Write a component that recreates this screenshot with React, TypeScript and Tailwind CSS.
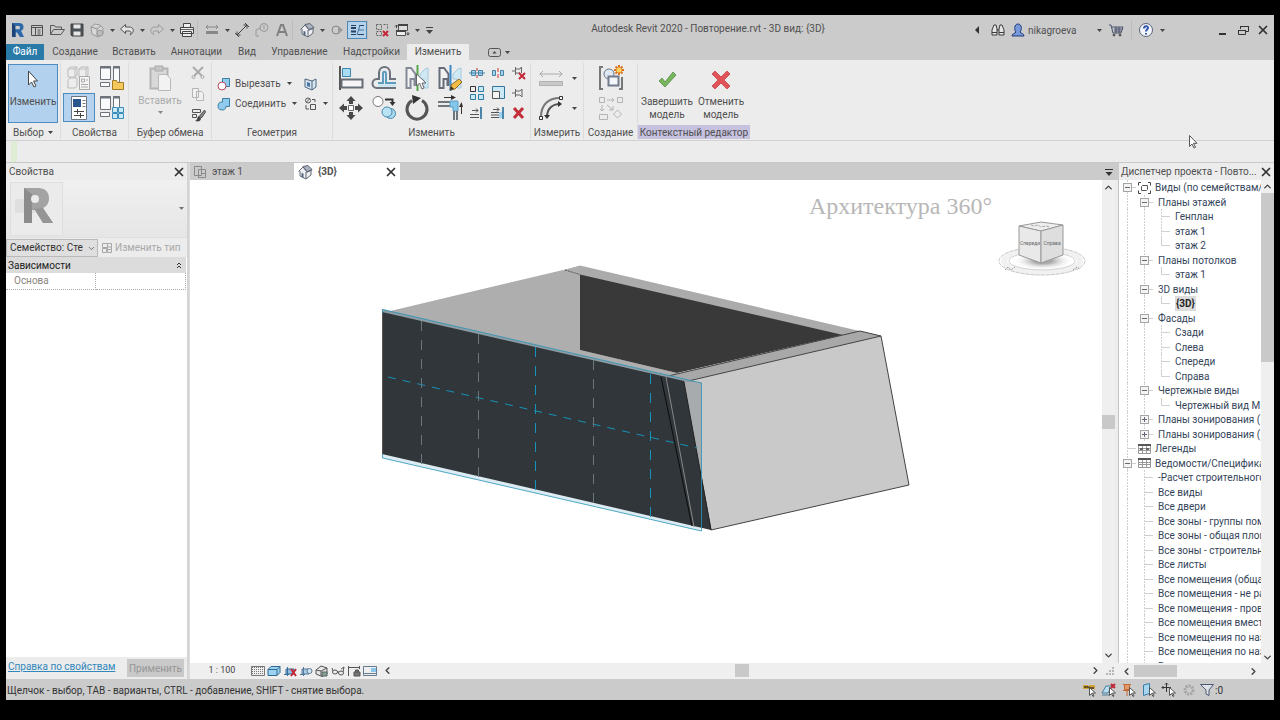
import React, { useState } from "react";
import clsx from "clsx";
import { ChevronDown, ChevronLeft, ChevronRight, ChevronUp, X } from "lucide-react";

type IconProps = {
  w?: number;
  h?: number;
  children: React.ReactNode;
};

const Icon = ({ w = 16, h = 16, children }: IconProps) => (
  <svg
    width={w}
    height={h}
    viewBox={`0 0 ${w} ${h}`}
    fill="none"
    stroke="#555"
    aria-hidden="true"
    className="shrink-0"
  >
    {children}
  </svg>
);

const Caret = ({ className }: { className?: string }) => (
  <svg
    width="5"
    height="3"
    viewBox="0 0 5 3"
    fill="#444"
    aria-hidden="true"
    className={clsx("shrink-0", className)}
  >
    <path d="M0 0h5L2.500 3z" />
  </svg>
);

const HouseIcon = () => (
  <Icon>
    <path d="M2 7l4-4 5-1 3 4v5l-5 4-6-3V7" fill="#eef0f3" stroke="#606875" />
    <path d="M1.500 7.500L6 3l4 5M9.500 8.500L15 6M9 8v7" stroke="#606875" />
    <path d="M6 2.500l5-1 4 4-5 2z" fill="#aab2c0" stroke="#606875" />
    <path d="M4.500 9v4l2 .8V9.600z" fill="#56657f" stroke="none" />
  </Icon>
);

/* ---------- Quick access toolbar ---------- */

const quickAccess: { label: string; icon?: React.ReactNode; active?: boolean }[] = [
  {
    label: "Revit",
    icon: (
      <Icon>
        <path
          d="M3 1h7c3 0 4.500 1.500 4.500 4s-1 3-2.500 3.800L15 15h-4L8 10.500H6.500V15H3z"
          fill="#2d68a8"
          stroke="none"
        />
        <path d="M3 1l3.500 3v11H3z" fill="#1d4477" stroke="none" />
        <path d="M6.500 4H9.500c2 0 2 3.300 0 3.300H6.500z" fill="#cbcbcb" stroke="none" />
      </Icon>
    ),
  },
  {
    label: "Главная",
    icon: (
      <Icon>
        <path d="M2.500 3.500h11v10h-11zM2.500 5.500h11M6.500 5.500v8M8.500 8h3M8.500 10h3M8.500 12h3" stroke="#505050" />
      </Icon>
    ),
  },
  {
    label: "Открыть",
    icon: (
      <Icon>
        <path d="M1.500 12.500v-9h4l1 1.500h6v2.500M1.500 12.500l3-5h11l-3.500 5z" stroke="#585858" />
      </Icon>
    ),
  },
  {
    label: "Сохранить",
    icon: (
      <Icon>
        <path d="M2 2h12v12H3l-1-1z" fill="#4b5057" stroke="#454545" />
        <path d="M4.500 2.500h7v4h-7zM4.500 9.500h7v4h-7z" fill="#e6e6e6" stroke="none" />
      </Icon>
    ),
  },
  {
    label: "Синхронизировать",
    icon: (
      <Icon>
        <path d="M2 5l4-3 5 1 3 3v6l-5 3-6-3zM2 5l6 2 4-3M8 7v7" stroke="#999" fill="#d8d8d8" />
        <circle cx="11" cy="11" r="3" fill="#bbb" stroke="#999" />
      </Icon>
    ),
  },
  { label: "caret" },
  {
    label: "Отменить",
    icon: (
      <Icon>
        <path d="M6.500 2.500L1.500 7l5 4.500V9H10c2 0 3 1.500 1 4 5-3 4-8-1-8H6.500z" fill="#e4e4e4" />
      </Icon>
    ),
  },
  { label: "caret" },
  {
    label: "Повторить",
    icon: (
      <Icon>
        <path d="M9.500 2.500l5 4.500-5 4.500V9H6c-2 0-3 1.500-1 4-5-3-4-8 1-8h3.500z" stroke="#9c9c9c" />
      </Icon>
    ),
  },
  { label: "caret" },
  {
    label: "Печать",
    icon: (
      <Icon>
        <path d="M4.500 5V1.500h7V5M1.500 5.500h13v6h-13zM3.500 9.500h9v5h-9z" fill="#eee" stroke="#444" />
        <path d="M2 7.500h12" stroke="#666" />
      </Icon>
    ),
  },
  { label: "sep" },
  {
    label: "Измерить",
    icon: (
      <Icon>
        <path d="M2 5h12M4 3L2 5l2 2M12 3l2 2-2 2" stroke="#888" />
        <path d="M2 9h12v3H2z" fill="#888" stroke="none" />
      </Icon>
    ),
  },
  { label: "caret" },
  {
    label: "Размер",
    icon: (
      <Icon>
        <path d="M3 13L13 3M3 13V9.500M3 13h3.500M13 3v3.500M13 3H9.500M1 11l4 4M11 1l4 4" stroke="#444" />
      </Icon>
    ),
  },
  {
    label: "Марка",
    icon: (
      <Icon>
        <path d="M2 14V8l5-2M2 14h3" stroke="#999" />
        <circle cx="10" cy="5.500" r="4" stroke="#999" />
        <path d="M9 4.500l1-1v4" stroke="#999" />
      </Icon>
    ),
  },
  {
    label: "Текст",
    icon: (
      <Icon>
        <path d="M3 14L7 3h2l4 11M5 10h6" stroke="#808080" strokeWidth="2" />
      </Icon>
    ),
  },
  { label: "sep" },
  { label: "3D вид", icon: <HouseIcon /> },
  { label: "caret" },
  {
    label: "Разрез",
    icon: (
      <Icon>
        <circle cx="7" cy="8" r="4" stroke="#858585" />
        <path d="M9 4l5 4-5 4z" fill="#999" stroke="none" />
      </Icon>
    ),
  },
  {
    label: "Тонкие линии",
    active: true,
    icon: (
      <Icon>
        <path d="M2 3.500h5M10 3.500h5M2 12.500h5M9 12.500h6" stroke="#26415f" />
        <path d="M2 6h5M2 9.500h5" stroke="#26415f" strokeWidth="2" />
        <path d="M11 3L8 13M9 8h6" stroke="#44749f" />
      </Icon>
    ),
  },
  { label: "sep" },
  {
    label: "Закрыть скрытые окна",
    icon: (
      <Icon>
        <path d="M2.500 2.500h5v5h-5zM9.500 2.500h4v5M2.500 9.500h5v4h-5z" stroke="#666" strokeDasharray="2 1" />
        <path d="M9 9l5 5M14 9l-5 5" stroke="#c32736" strokeWidth="2" />
      </Icon>
    ),
  },
  {
    label: "Переключение окон",
    icon: (
      <Icon>
        <path d="M4.500 2.500h9v6h-9z" fill="#ddd" stroke="#505050" />
        <path d="M2.500 8.500h9v5h-9z" fill="#eee" stroke="#505050" />
        <path d="M4 3h10M2 9h10" stroke="#444" strokeWidth="2" />
        <path d="M2.500 6V3M1 4.500L2.500 3 4 4.500M14 10v3M12.500 11.500l1.500 1.500 1.500-1.500" stroke="#444" />
      </Icon>
    ),
  },
  { label: "caret" },
];

const QuickAccess = () => (
  <div className="flex items-center">
    {quickAccess.map(({ label, icon, active }, i) => {
      if (label === "caret")
        return (
          <span key={i} className="flex w-[10px] justify-center">
            <Caret />
          </span>
        );
      if (label === "sep")
        return <span key={i} className="h-5 w-[5px] border-l border-[#bdbdbd]" />;
      return (
        <button
          key={i}
          aria-label={label}
          className={clsx(
            "flex h-[18px] w-5 items-center justify-center",
            active && "border border-[#4f87b5] bg-[#b5d2ec]"
          )}
        >
          {icon}
        </button>
      );
    })}
    <Icon w={14} h={10}>
      <path d="M4 2.500h7" stroke="#444" />
      <path d="M4 5h7L7.500 9z" fill="#444" stroke="none" />
    </Icon>
  </div>
);

const TitleBar = () => (
  <header className="grid h-[29px] grid-cols-[auto_1fr_auto] items-center bg-[#cbcbcb] pl-px pt-px text-[10px] text-[#505050]">
    <QuickAccess />
    <h1 className="pb-1 pl-[6px] text-center">Autodesk Revit 2020 - Повторение.rvt - 3D вид: {"{3D}"}</h1>
    <div className="flex items-center justify-end pr-1">
      <Icon w={6} h={8}>
        <path d="M5 0v8L1 4z" fill="#333" stroke="none" />
      </Icon>
      <button aria-label="Поиск" className="ml-2 flex w-5 justify-center">
        <Icon>
          <path d="M2 8l2-5h2l1 4v6H2zM14 8l-2-5h-2L9 7v6h5zM7 8h2M2 10.500h5M9 10.500h5" fill="#e6e6e6" stroke="#3c3c3c" />
        </Icon>
      </button>
      <button aria-label="Учетная запись" className="flex w-5 justify-center">
        <Icon>
          <path d="M2 14c0-3 3-2 4-4-2-2-2-8 2-8s4 6 2 8c1 2 4 1 4 4z" fill="#7898dc" stroke="#233d78" />
        </Icon>
      </button>
      <span className="w-[69px]">nikagroeva</span>
      <Caret />
      <button aria-label="Магазин" className="ml-1 mr-[5px] flex w-5 justify-center">
        <Icon>
          <path d="M1 3h2l2 8h8l2-6H4M6 7h8M6 9h7M8 5v6M11 5v6" stroke="#44506a" />
          <circle cx="6" cy="13" r="1" fill="#444" />
          <circle cx="12" cy="13" r="1" fill="#444" />
        </Icon>
      </button>
      <span className="h-5 border-l border-[#bdbdbd]" />
      <button aria-label="Справка" className="ml-1 mr-1 flex w-5 justify-center">
        <Icon>
          <circle cx="8" cy="8" r="6.500" fill="#f3f5fa" stroke="#596579" />
          <path d="M6 6.500c0-3 4-3 4-.7C10 7.500 8 7.500 8 9.500M8 11v1.500" stroke="#3057ad" strokeWidth="2" />
        </Icon>
      </button>
      <Caret />
      <div className="ml-[49px] flex">
        <button aria-label="Свернуть" className="w-[21px]">
          <Icon>
            <path d="M5 12h7" stroke="#333" strokeWidth="2" />
          </Icon>
        </button>
        <button aria-label="Восстановить" className="w-[21px]">
          <Icon>
            <path d="M5.500 7V4.500h8v5H11M3.500 8.500h7v4h-7zM5 4.500h9M3 8.500h8" stroke="#333" />
          </Icon>
        </button>
        <button aria-label="Закрыть">
          <X size={14} strokeWidth={3} color="#333" />
        </button>
      </div>
    </div>
  </header>
);

/* ---------- Ribbon ---------- */

const ribbonTabs = [
  { name: "Создание", width: "w-[62px]" },
  { name: "Вставить", width: "w-[56px]" },
  { name: "Аннотации", width: "w-[69px]" },
  { name: "Вид", width: "w-[32px]" },
  { name: "Управление", width: "w-[73px]" },
  { name: "Надстройки", width: "w-[71px]" },
  { name: "Изменить", width: "w-[62px]" },
];

const RibbonTabs = () => {
  const [tab, setTab] = useState("Изменить");

  return (
    <nav className="flex h-4 bg-[#cbcbcb] text-[10px] text-[#505050]">
      <button className="w-[38px] bg-[#2a7aa8] leading-4 text-white">Файл</button>
      {ribbonTabs.map(({ name, width }) => (
        <button
          key={name}
          onClick={() => setTab(name)}
          className={clsx(
            "whitespace-nowrap leading-4",
            width,
            tab === name && "bg-[#ececec]"
          )}
        >
          {name}
        </button>
      ))}
      <button aria-label="Свернуть ленту" className="ml-[19px] flex items-center gap-1">
        <Icon w={13} h={9}>
          <rect x=".5" y=".5" width="12" height="8" rx="2" />
          <path d="M4.500 5.500h4l-2-2.500z" fill="#444" stroke="none" />
        </Icon>
        <Caret />
      </button>
    </nav>
  );
};

type PanelProps = {
  title: string;
  width: string;
  menu?: boolean;
  context?: boolean;
  children: React.ReactNode;
};

const Panel = ({ title, width, menu, context, children }: PanelProps) => (
  <section
    className={clsx(
      "flex shrink-0 flex-col justify-between",
      width,
      !context && "border-r border-[#dcdcdc]"
    )}
  >
    <div className="flex h-[60px] items-center justify-center">{children}</div>
    <h2
      className={clsx(
        "flex h-[14px] items-center justify-center whitespace-nowrap",
        context && "bg-[#c5c1df]"
      )}
    >
      {title}
      {menu && <Caret className="ml-1" />}
    </h2>
  </section>
);

const Tool = ({ label, className, children }: { label: string; className?: string; children: React.ReactNode }) => (
  <button aria-label={label} className={clsx("flex items-center justify-center", className)}>
    {children}
  </button>
);

const bigTools = [
  {
    label: "Выровнять",
    icon: (
      <Icon w={26} h={26}>
        <path d="M2 1v24" stroke="#555" strokeWidth="2" />
        <path d="M4.500 3.500h8v8h-8z" fill="#a9dbf3" stroke="#3a87b0" />
        <path d="M3.500 14.500h21v8h-21z" fill="#f5f5f5" stroke="#676d76" strokeWidth="2" />
      </Icon>
    ),
  },
  {
    label: "Смещение",
    icon: (
      <Icon w={26} h={26}>
        <path d="M25 14h-6V8c0-8-11-8-11 0v6H6c-6 0-6 9 0 9h19" stroke="#6c727b" strokeWidth="2" />
        <path d="M25 18H15V9c0-3-3-3-3 0v9H7" stroke="#5b9cbf" strokeWidth="2" />
        <path d="M7 20.500h18" stroke="#c5e4f2" strokeWidth="2" />
      </Icon>
    ),
  },
  {
    label: "Зеркало - Выбрать ось",
    icon: (
      <Icon w={26} h={26}>
        <path d="M2.500 3v20h4v-9h4v6h1V9L7 3z" fill="#f2f2f2" stroke="#838996" strokeWidth="2" />
        <path d="M24 3v20h-4v-9h-4V9l5-5z" fill="#cfe8f4" stroke="#a3cadc" />
        <path d="M13.500 0v26" stroke="#58a64b" strokeWidth="2" />
        <path d="M12.500 9v12l3-3 2.500 6 2-1-2-5h4z" fill="#fff" stroke="#666" />
      </Icon>
    ),
  },
  {
    label: "Зеркало - Нарисовать ось",
    icon: (
      <Icon w={26} h={26}>
        <path d="M2.500 3v20h4v-9h4v6h1V9L7 3z" fill="#f2f2f2" stroke="#676d78" strokeWidth="2" />
        <path d="M24 3v20h-4v-9h-4V9l5-5z" fill="#cfe8f4" stroke="#a3cadc" />
        <path d="M13.500 0v26" stroke="#3a8ccc" strokeWidth="2" />
        <path d="M13 25l1-5 8-6 3 3-7 7z" fill="#f2bd45" stroke="#8d6828" />
        <path d="M13 25l1-4 3 3z" fill="#333" stroke="none" />
      </Icon>
    ),
  },
  {
    label: "Переместить",
    icon: (
      <Icon w={26} h={26}>
        <path d="M10.500 10.500h5v5h-5z" fill="#fff" stroke="#666" />
        <path
          d="M13 1l4.500 5H15v3h-4V6H8.500zM13 25l4.500-5H15v-3h-4v3H8.500zM1 13l5-4.500V11h3v4H6v2.500zM25 13l-5-4.500V11h-3v4h3v2.500z"
          fill="#484848"
          stroke="none"
        />
      </Icon>
    ),
  },
  {
    label: "Копировать",
    icon: (
      <Icon w={26} h={26}>
        <circle cx="7" cy="6.500" r="5" fill="#fff" stroke="#777" />
        <path d="M14 4.500h7.500v4" stroke="#333" strokeWidth="2" />
        <path d="M18.500 7h6l-3 4z" fill="#333" stroke="none" />
        <circle cx="19.500" cy="18.500" r="5" fill="#a9dbf3" stroke="#4589ac" />
        <circle cx="16" cy="17" r="5" fill="#b9e2f5" stroke="#4589ac" />
      </Icon>
    ),
  },
  {
    label: "Повернуть",
    icon: (
      <Icon w={26} h={26}>
        <path d="M18 5.500A10 10 0 1 1 8 5.500" stroke="#555" strokeWidth="3" />
        <path d="M8 0l9 3-8 6z" fill="#333" stroke="none" />
      </Icon>
    ),
  },
  {
    label: "Обрезать в угол",
    icon: (
      <Icon w={26} h={26}>
        <path d="M1 7h12M1 11h12" stroke="#70767e" strokeWidth="2" />
        <path d="M13 6h8v10h-5v-4h-3z" fill="#83c7ea" stroke="#5aa0c4" />
        <path d="M17 16v9M20 16v9" stroke="#70767e" strokeWidth="2" />
        <path d="M7 2.500h8M24.500 19v-7" stroke="#333" />
        <path d="M14 0l5 2.500L14 5zM22 12l2.500-5 1.500 5z" fill="#333" stroke="none" />
      </Icon>
    ),
  },
];

const smallTools = [
  {
    label: "Разделить элемент",
    icon: (
      <Icon>
        <path d="M2.500 5.500h4v5h-4zM9.500 5.500h4v5h-4z" fill="#9fd2ee" stroke="#4a81a3" />
        <path d="M0 8h16" stroke="#4a81a3" />
        <path d="M8 3v3M8 10v3" stroke="#b33" />
      </Icon>
    ),
  },
  {
    label: "Разделить с зазором",
    icon: (
      <Icon>
        <path d="M2.500 5.500h3v5h-3zM10.500 5.500h3v5h-3z" fill="#9fd2ee" stroke="#4a81a3" />
        <path d="M8 3v4M8 9v4" stroke="#c33" />
      </Icon>
    ),
  },
  {
    label: "Открепить",
    icon: (
      <Icon>
        <path d="M1 6h3M4.500 2v8M4.500 4H9M4.500 8H9M10.500 2v6M9 4l1.500-2" stroke="#666" />
        <path d="M8 8l6 6M14 8l-6 6" stroke="#c32736" strokeWidth="2" />
      </Icon>
    ),
  },
  {
    label: "Массив",
    icon: (
      <Icon>
        <path d="M1.500 1.500h5v5h-5z" fill="#eee" stroke="#333" />
        <path d="M9.500 1.500h5v5h-5zM1.500 9.500h5v5h-5zM9.500 9.500h5v5h-5z" fill="#c9e8f6" stroke="#2d7aa3" />
      </Icon>
    ),
  },
  {
    label: "Масштаб",
    icon: (
      <Icon>
        <path d="M2.500 1.500h12v12h-12z" fill="#cbe8f6" stroke="#347697" />
        <path d="M2.500 6.500h7v7h-7z" fill="#f4f4f4" stroke="#555" />
      </Icon>
    ),
  },
  {
    label: "Закрепить",
    icon: (
      <Icon>
        <path d="M1 8h3M4.500 4v8M4.500 6H9l2-2v8l-2-2H4.500" stroke="#666" />
      </Icon>
    ),
  },
  {
    label: "Обрезать элемент",
    icon: (
      <Icon>
        <path d="M1 9.500h9M1 12.500h9M3 5.500h6M7 3.500l2 2-2 2" stroke="#555" />
        <path d="M12 2v12" stroke="#4a87ab" strokeWidth="2" />
      </Icon>
    ),
  },
  {
    label: "Обрезать несколько",
    icon: (
      <Icon>
        <path d="M1 7.500h9M1 10h9M1 12.500h9M3 4.500h6M7 2.500l2 2-2 2" stroke="#555" />
        <path d="M9 7h4v6H9z" fill="#9fd2ee" stroke="none" />
        <path d="M13 2v12" stroke="#4a87ab" strokeWidth="2" />
      </Icon>
    ),
  },
  {
    label: "Удалить",
    icon: (
      <Icon>
        <path d="M3 3l9 10M12 3L3 13" stroke="#c22f3b" strokeWidth="3" />
      </Icon>
    ),
  },
];

const PropsFrames = () => (
  <>
    <path d="M2.500 1.500h10v13h-10zM15.500 1.500h6v18h-6zM2.500 17.500h9v4h-9z" fill="#fafafa" stroke="#6d727b" />
    <path d="M2 2.500h11M15 2.500h7" stroke="#6d727b" strokeWidth="2" />
  </>
);

const Ribbon = () => (
  <div className="flex h-[80px] overflow-hidden bg-[#ececec] pb-px pt-[3px] text-[10px] text-[#505050]">
    <Panel title="Выбор" width="w-[55px]" menu>
      <button className="flex h-[59px] w-[50px] flex-col items-center justify-between border border-[#4d8cc0] bg-[#b2d1ee] pb-[14px] pt-[5px]">
        <Icon w={12} h={18}>
          <path d="M1.500 1v14l3-3 2.500 5 2-1-2.500-5h4z" fill="#fff" stroke="#444" />
        </Icon>
        <span className="leading-3">Изменить</span>
      </button>
    </Panel>
    <Panel title="Свойства" width="w-[68px]">
      <div className="grid grid-cols-2 grid-rows-2">
        <Tool label="Категория" className="h-[30px] w-8">
          <Icon w={26} h={26}>
            <path
              d="M2 4l2-2h7v8l-2 2H2zM13 4l2-2h7v8l-2 2h-7zM2 15l2-2h7v8l-2 2H2zM2 4h7v8M9 4l2-2M13 4h7v8M20 4l2-2"
              fill="#eee"
              stroke="#bbb"
            />
            <path d="M13.500 11.500h10v13h-10z" fill="#f4f4f4" stroke="#aaa" />
            <path d="M15.500 14h3v3h-3zM20 15h2M15 19.500h7M15 22h7" stroke="#aaa" />
          </Icon>
        </Tool>
        <Tool label="Типоразмеры" className="h-[30px] w-8">
          <Icon w={26} h={26}>
            <PropsFrames />
            <path d="M14.500 15.500h4l1 2h6v7h-11z" fill="#f5c85c" stroke="#a47b24" />
          </Icon>
        </Tool>
        <Tool label="Свойства" className="h-[29px] w-8 border border-[#4d8cc0] bg-[#b5d3ee]">
          <Icon w={20} h={26}>
            <path d="M2.500 1.500h15v23h-15z" fill="#fff" stroke="#6c7480" />
            <path d="M4 4h8v8H4z" fill="#29558c" stroke="none" />
            <path d="M13.500 5.500h3M13.500 8.500h3M13.500 11.500h3" stroke="#777" />
            <path d="M5 16.500h10M5 20.500h10M8.500 14v5M11.500 18v5" stroke="#444" />
          </Icon>
        </Tool>
        <Tool label="Типы семейств" className="h-[30px] w-8">
          <Icon w={26} h={26}>
            <PropsFrames />
            <path
              d="M14.500 12.500h5v5h-5zM20.500 12.500h5v5h-5zM14.500 18.500h5v5h-5zM20.500 18.500h5v5h-5z"
              fill="#c9e9f8"
              stroke="#3c8db7"
            />
          </Icon>
        </Tool>
      </div>
    </Panel>
    <Panel title="Буфер обмена" width="w-[83px]">
      <div className="flex h-full w-full justify-between pl-[10px] pr-[5px] pt-[2px]">
        <button disabled className="flex w-[42px] flex-col items-center text-[#aaa]">
          <Icon w={24} h={26}>
            <path d="M2.500 3.500h17v20h-17z" fill="#d8d8d8" stroke="#b4b4b4" strokeWidth="2" />
            <path d="M7 1h8v5H7z" fill="#c6c6c6" stroke="#aaa" />
            <path d="M10.500 9.500h8l4 4v12h-12z" fill="#f2f2f2" stroke="#b9b9b9" />
          </Icon>
          <span className="mt-[2px] leading-4">Вставить</span>
          <Caret className="mt-[2px] opacity-60" />
        </button>
        <div className="flex flex-col justify-between">
          <Tool label="Вырезать">
            <Icon>
              <path d="M3 2l9 9M13 2L4 11" stroke="#aaa" strokeWidth="2" />
              <circle cx="3.500" cy="12" r="1.500" stroke="#aaa" />
              <circle cx="12.500" cy="12" r="1.500" stroke="#aaa" />
            </Icon>
          </Tool>
          <Tool label="Копировать">
            <Icon>
              <path d="M2.500 2.500h6v9h-6zM6.500 5.500h5l2 2v7h-7z" fill="#f1f1f1" stroke="#b5b5b5" />
            </Icon>
          </Tool>
          <Tool label="Копировать свойства">
            <Icon>
              <path d="M2.500 2.500h8v3h-8zM2.500 7.500h4v3h-4z" stroke="#555" />
              <path d="M14.500 3l-5 6 2 2 4-6z" fill="#888" stroke="#555" />
              <path d="M9 9c-2 0-1 4-4 5 4 1 6 0 6-3z" fill="#444" stroke="none" />
            </Icon>
          </Tool>
        </div>
      </div>
    </Panel>
    <Panel title="Геометрия" width="w-[121px]">
      <div className="grid w-full grid-cols-[82px_auto] gap-y-1 pl-1 pt-px">
        <button className="flex items-center gap-[3px]">
          <Icon>
            <path d="M6.500 2.500h7v8h-7z" fill="#8fcbed" stroke="#3c7da3" />
            <circle cx="6" cy="10" r="4" fill="#fff" stroke="#b8485d" />
          </Icon>
          Вырезать
          <Caret className="ml-[3px]" />
        </button>
        <Tool label="Грань" className="pr-2">
          <Icon>
            <path d="M2 3l7 2v9l-7-3zM9 5l4-2v8l-4 3" fill="#d5e5f1" stroke="#50657d" />
            <path d="M4 6l3 1v4l-3-1z" fill="#48739f" stroke="none" />
          </Icon>
        </Tool>
        <button className="flex items-center gap-[3px]">
          <Icon>
            <path d="M6.500 2.500h7v8H10a4 4 0 1 1-3.500-4.500z" fill="#8fcbed" stroke="#3c7da3" />
          </Icon>
          Соединить
          <Caret className="ml-[3px]" />
        </button>
        <Tool label="Соединение стен" className="gap-1">
          <Icon>
            <circle cx="5" cy="4.500" r="2.500" />
            <path d="M3.500 6l3-3M3 9v4h3M9 3.500h3V6M7.500 8.500h5v5h-5z" />
          </Icon>
          <Caret />
        </Tool>
      </div>
    </Panel>
    <Panel title="Изменить" width="w-[198px]">
      <div className="grid grid-cols-4">
        {bigTools.map(({ label, icon }) => (
          <Tool key={label} label={label} className="h-[30px] w-[33px]">
            {icon}
          </Tool>
        ))}
      </div>
      <div className="grid grid-cols-3">
        {smallTools.map(({ label, icon }) => (
          <Tool key={label} label={label} className="h-5 w-[21px]">
            {icon}
          </Tool>
        ))}
      </div>
    </Panel>
    <Panel title="Измерить" width="w-[53px]">
      <div className="flex flex-col">
        <Tool label="Измерить расстояние" className="h-[30px] gap-2">
          <Icon w={26} h={26}>
            <path d="M1.500 9h23M5 6L2 9l3 3M21 6l3 3-3 3" stroke="#aaa" />
            <path d="M1.500 16.500h23v4h-23z" fill="#c8c8c8" stroke="#b2b2b2" />
          </Icon>
          <Caret />
        </Tool>
        <Tool label="Размер дуги" className="h-[30px] gap-2">
          <Icon w={26} h={26}>
            <path d="M3 22C3 10 10 3 22 3" stroke="#777" strokeWidth="2" />
            <path d="M9 22C9 14 14 9 22 9" stroke="#555" strokeWidth="2" />
            <path d="M1.500 21.500h3v3h-3zM21.500 1.500h3v3h-3z" fill="#fff" stroke="#333" />
            <path d="M6 20h6l-3 4zM20 6l4 3-4 3z" fill="#333" stroke="none" />
          </Icon>
          <Caret />
        </Tool>
      </div>
    </Panel>
    <Panel title="Создание" width="w-[54px]">
      <div className="flex flex-col">
        <Tool label="Создать группу" className="h-[30px]">
          <Icon w={28} h={28}>
            <path d="M6 3H3v22h3M22 25h3V13" stroke="#777" strokeWidth="2" />
            <circle cx="12" cy="10" r="5" fill="#dfe8f3" stroke="#6b7684" />
            <path d="M11.500 12.500h10v9h-10z" fill="#f3f6fa" stroke="#727b89" strokeWidth="2" />
            <path d="M22 1v10M17 6h10M18.500 2.500l7 7M25.500 2.500l-7 7" stroke="#d97320" strokeWidth="2" />
            <circle cx="22" cy="6" r="2.500" fill="#fbd561" stroke="none" />
          </Icon>
        </Tool>
        <Tool label="Создать сборку" className="h-[30px]">
          <Icon w={26} h={26}>
            <path
              d="M1.500 2.500h5v5h-5zM19.500 2.500h5v5h-5zM1.500 19.500h8v5h-8zM19.500 15l4 4-4 4-4-4zM9 5h7M14 3l2 2-2 2M4 10v6M2 14l2 2 2-2M9 10l6 5M15 11v4h-4"
              stroke="#b4b4b4"
            />
          </Icon>
        </Tool>
      </div>
    </Panel>
    <Panel title="Контекстный редактор" width="w-[112px]" context>
      <button className="flex w-[54px] flex-col items-center gap-[2px] pt-[2px] leading-[13px]">
        <Icon w={22} h={26}>
          <path d="M3 14l3-3 3 4 8-10 3 3L9 20z" fill="#75b65b" stroke="#6a9a5b" />
        </Icon>
        <span>
          Завершить
          <br />
          модель
        </span>
      </button>
      <button className="flex w-[54px] flex-col items-center gap-[2px] pt-[2px] leading-[13px]">
        <Icon w={22} h={26}>
          <path
            d="M5 4l6 6 6-6 3 3-6 6 6 6-3 3-6-6-6 6-3-3 6-6-6-6z"
            fill="#e25458"
            stroke="#c8565a"
          />
        </Icon>
        <span>
          Отменить
          <br />
          модель
        </span>
      </button>
    </Panel>
  </div>
);

/* ---------- Properties palette ---------- */

const PropertiesPanel = () => (
  <aside className="flex w-[181px] shrink-0 flex-col bg-[#ececec] text-[10px] text-[#505050]">
    <div className="flex h-[17px] shrink-0 items-center justify-between pl-[3px] pr-px">
      <h2>Свойства</h2>
      <button aria-label="Закрыть свойства">
        <X size={14} strokeWidth={3} color="#333" />
      </button>
    </div>
    <div className="flex h-[58px] shrink-0 items-center justify-between border-b border-[#e0e0e0] bg-linear-to-b from-[#f0f0f0] to-[#e6e6e6] pr-[3px]">
      <div className="ml-1 flex h-[54px] w-[53px] items-start justify-center border border-[#dedede] bg-[#ebebeb] pt-1">
        <Icon w={44} h={40}>
          <path d="M0 12h20v14H0z" fill="#dfdfdf" stroke="none" />
          <path
            d="M9 1h14c7 0 11 4 11 10 0 5-2 8-6 10l10 15H28l-8-13h-3v13H9z"
            fill="#a3a3a3"
            stroke="none"
          />
          <path d="M9 1l8 6v29H9z" fill="#8c8c8c" stroke="none" />
          <circle cx="20" cy="12" r="4" fill="#ebebeb" stroke="none" />
          <path d="M17 22l3 1 8 13h10l-10-15z" fill="#959595" stroke="none" />
        </Icon>
      </div>
      <Caret className="opacity-70" />
    </div>
    <div className="flex h-[19px] shrink-0 items-center">
      <div className="relative">
        <select
          aria-label="Семейство"
          className="block h-[18px] w-[92px] appearance-none border border-[#b9b9b9] bg-[#dfdfdf] pl-[3px] pr-[14px] text-[10px] text-[#333]"
        >
          <option>Семейство: Стены</option>
        </select>
        <ChevronDown size={9} className="pointer-events-none absolute right-[2px] top-[5px]" />
      </div>
      <button disabled className="flex flex-1 items-center gap-[2px] whitespace-nowrap pl-[3px] text-[#a8a8a8]">
        <Icon w={12} h={12}>
          <path d="M1.500 1.500h5v4h-5zM6.500 1.500h4v9h-4zM1.500 6.500h4v4h-4zM7 5h3M7 7.500h3" stroke="#a8a8a8" />
        </Icon>
        Изменить тип
      </button>
    </div>
    <div className="flex-1 bg-white">
      <table className="w-[180px] table-fixed border-collapse">
        <tbody>
          <tr className="h-4 bg-[#dcdcdc] text-[#222]">
            <th colSpan={2} className="p-0 pl-[2px] text-left font-normal leading-[15px]">
              <div className="flex items-center justify-between pr-1">
                Зависимости
                <Icon w={6} h={7}>
                  <path d="M1 3l2-2 2 2M1 6l2-2 2 2" stroke="#333" />
                </Icon>
              </div>
            </th>
          </tr>
          <tr className="h-4">
            <td className="w-1/2 border-b border-r border-dotted border-[#aaa] p-0 pl-2 leading-[15px] text-[#8a857e]">
              Основа
            </td>
            <td className="border-b border-r border-dotted border-[#aaa] p-0" />
          </tr>
        </tbody>
      </table>
    </div>
    <div className="flex h-[22px] shrink-0 items-center justify-between pl-[2px] pr-[3px]">
      <a href="#help" className="pb-1 text-[#3387bb] underline">
        Справка по свойствам
      </a>
      <button disabled className="h-[18px] w-[57px] bg-[#c9c9c9] text-[#979797]">
        Применить
      </button>
    </div>
  </aside>
);

/* ---------- Drawing area ---------- */

const verticals = [
  { x: 421, y1: 321, y2: 467, color: "#6d777b" },
  { x: 478, y1: 334, y2: 480, color: "#6d777b" },
  { x: 535, y1: 347, y2: 493, color: "#1593b8" },
  { x: 593, y1: 360, y2: 506, color: "#6d777b" },
  { x: 650, y1: 374, y2: 519, color: "#1593b8" },
];

const Model = () => (
  <svg viewBox="190 180 912 483" className="h-full w-full" fill="none" aria-hidden="true">
    {/* back wall and side walls */}
    <path d="M565 270L580 265.500L881 336L859 352L580 290z" fill="#ababab" />
    <path d="M382 313L580 266V350L677 373L672 382z" fill="#aeaeae" />
    <path d="M580 274.500L843 335L677 373L580 350z" fill="#393939" />
    <path d="M565 270l15 4.500" stroke="#555" strokeDasharray="2 1" />
    {/* right wall */}
    <path d="M662 377L860 331L881 336L685 382z" fill="#a8a8a8" />
    <path d="M684 382L881 336L909 485L711 530z" fill="#c9c9c9" stroke="#444" />
    <path d="M664 377L860 331L881 336" stroke="#444" />
    {/* curtain wall */}
    <path d="M382 309L702 383V388L382 314z" fill="#8d9ca3" />
    <path d="M382 453L700 526V531L382 458z" fill="#dcecf2" />
    <path d="M382 312L684 381L711 530L382 454z" fill="#30363a" />
    <path d="M684 382H702V480z" fill="#a8abae" />
    <path d="M661 377l31 149" stroke="#0c0c0c" />
    <path d="M666 377l28 150" stroke="#888" />
    <path d="M684 382l27 148" stroke="#222" />
    <path d="M388 377L697 448" stroke="#1593b8" strokeDasharray="8 7" />
    {verticals.map(({ x, y1, y2, color }) => (
      <path key={x} d={`M${x}.5 ${y1}V${y2}`} stroke={color} strokeDasharray="10 9" />
    ))}
    <path
      d="M382.500 309.500L701.500 383V531L382.500 458z"
      stroke="#2b96b9"
      strokeWidth=".8"
    />
    <path d="M382.500 313v141" stroke="#555" />
  </svg>
);

const ViewCube = () => (
  <svg width="90" height="58" viewBox="0 0 90 58" fill="none" aria-hidden="true">
    <defs>
      <radialGradient id="shade">
        <stop offset=".3" stopColor="#aaa" />
        <stop offset="1" stopColor="#fff" stopOpacity="0" />
      </radialGradient>
    </defs>
    <ellipse cx="45" cy="41" rx="38" ry="11" stroke="#f1f1f1" strokeWidth="6" />
    <ellipse cx="45" cy="41" rx="43" ry="14" stroke="#c5c5c5" strokeDasharray="4 1" />
    <ellipse cx="45" cy="41" rx="33" ry="9" stroke="#d5d5d5" />
    <ellipse cx="46" cy="41" rx="30" ry="9" fill="url(#shade)" />
    <path d="M8 50l3-3 3 3 4-3M76 50l4-3 3 2" stroke="#999" strokeDasharray="2 1" />
    <path d="M22 6L44 2L66 5L44 11z" fill="#eee" stroke="#999" />
    <path d="M22 6L44 11V43L22 35z" fill="#e9e9e9" stroke="#999" />
    <path d="M66 5L44 11V43L66 35z" fill="#dedede" stroke="#999" />
    <path d="M34 5l3 1 4-1 3 2 5-1 4 1" stroke="#aaa" strokeDasharray="3 1" />
    <g fontSize="5" fill="#666" fontFamily="Roboto, sans-serif" textAnchor="middle">
      <text x="33" y="25">
        Спереди
      </text>
      <text x="55" y="25">
        Справа
      </text>
    </g>
  </svg>
);

const viewControls = [
  {
    label: "Уровень детализации",
    icon: (
      <Icon w={14} h={12}>
        <path d="M1 2.500h12M1 4.500h12M1 6.500h12M1 8.500h12" stroke="#777" strokeDasharray="1 1" />
        <path d="M.5 1.500h13v9H.5z" stroke="#777" />
      </Icon>
    ),
  },
  {
    label: "Визуальный стиль",
    icon: (
      <Icon w={14} h={12}>
        <path d="M1 4.500l3-3h9v6l-3 3H1zM1 4.500h9v6M10 4.500l3-3" fill="#9bd4f3" stroke="#31698e" />
      </Icon>
    ),
  },
  {
    label: "Подрезать вид",
    icon: (
      <Icon w={14} h={12}>
        <path d="M3 4h8v5H3z" fill="#8fbde0" stroke="#3b6f9c" />
        <path d="M1 9.500h5M4.500 2v9" stroke="#3b6f9c" />
        <path d="M8 4l5 7M13 4l-5 7" stroke="#c32736" strokeWidth="2" />
      </Icon>
    ),
  },
  {
    label: "Показать границу подрезки",
    icon: (
      <Icon w={14} h={12}>
        <path d="M3 4h7v5H3z" fill="#a9cbe4" stroke="#55799b" />
        <path d="M1 9.500h5M4.500 2v9" stroke="#55799b" />
        <circle cx="10.500" cy="6" r="2.500" fill="#cfe8f7" stroke="#678" />
      </Icon>
    ),
  },
  {
    label: "Блокировка вида",
    icon: (
      <Icon w={14} h={12}>
        <path d="M1 5l5-4 6 2v6l-5 2.500L1 9zM1 5l5 1 6-3M6 6v5" fill="#e5e5e5" />
        <path d="M7 7h5v4H7z" fill="#8aa391" stroke="#566" />
      </Icon>
    ),
  },
  {
    label: "Временно скрыть",
    icon: (
      <Icon w={14} h={12}>
        <ellipse cx="4" cy="7" rx="2.500" ry="2" />
        <ellipse cx="10" cy="8" rx="2.500" ry="2" />
        <path d="M6 7h2M2 6L1 3M12 7l1-5-3 2" />
      </Icon>
    ),
  },
  {
    label: "Показать ограничения",
    icon: (
      <Icon w={14} h={12}>
        <path d="M1.500 1v10M12.500 1v3M1 2.500h12" />
        <path d="M7 7h6v4H7zM8.500 7V5h3v2" fill="#777" stroke="#555" />
      </Icon>
    ),
  },
  {
    label: "Свойства временного вида",
    icon: (
      <Icon w={14} h={12}>
        <path d="M.5 1.500h13v9H.5zM1 8.500h12" stroke="#667b8d" />
        <path d="M8 3h5v4H8z" fill="#8ac6eb" stroke="none" />
      </Icon>
    ),
  },
];

const DrawingArea = () => (
  <main className="flex min-w-0 flex-1 flex-col border-l border-[#ddd] bg-white text-[10px]">
    <div className="flex h-[17px] shrink-0 bg-[#cbcbcb] text-[#505050]">
      <button className="flex w-[104px] items-center gap-[5px] pl-[3px]">
        <Icon w={14} h={14}>
          <path d="M1.500 1.500h7v9h-7zM5.500 4.500h7v8h-7zM8.500 4.500v4h4" stroke="#8a8a8a" />
        </Icon>
        этаж 1
      </button>
      <div className="flex w-[106px] items-center justify-between bg-white pl-[3px] pr-[2px]">
        <button className="flex items-center gap-[5px] font-bold">
          <HouseIcon />
          {"{3D}"}
        </button>
        <button aria-label="Закрыть вид">
          <X size={14} strokeWidth={3} color="#333" />
        </button>
      </div>
      <button aria-label="Список видов" className="ml-auto mr-1">
        <Icon w={12} h={10}>
          <path d="M2 2.500h8" stroke="#333" />
          <path d="M2.500 5h7L6 9z" fill="#333" stroke="none" />
        </Icon>
      </button>
    </div>
    <div className="flex min-h-0 flex-1">
      <div className="relative min-w-0 flex-1">
        <Model />
        <p className="absolute right-[110px] top-[10px] font-['Liberation_Serif',serif] text-2xl text-[#b7b7b7]">
          Архитектура 360°
        </p>
        <div className="absolute right-[15px] top-10">
          <ViewCube />
        </div>
      </div>
      <div className="flex w-[13px] flex-col items-center justify-between bg-[#efefef] py-[2px] text-[#444]">
        <ChevronUp size={11} strokeWidth={3} />
        <div className="h-[14px] w-full bg-[#c9c9c9]" />
        <ChevronDown size={11} strokeWidth={3} />
      </div>
      <div className="w-1 border-r border-[#c5c5c5] bg-[#ececec]" />
    </div>
    <div className="flex h-4 shrink-0 items-center bg-[#efefef] pb-px text-[#444]">
      <button className="w-[60px] pl-1 text-[9px]">1 : 100</button>
      {viewControls.map(({ label, icon }) => (
        <Tool key={label} label={label} className="w-4 shrink-0">
          {icon}
        </Tool>
      ))}
      <ChevronLeft size={11} strokeWidth={3} className="ml-1 shrink-0" />
      <div className="flex h-full flex-1 justify-center py-px">
        <div className="h-full w-[14px] bg-[#c9c9c9]" />
      </div>
      <ChevronRight size={11} strokeWidth={3} className="shrink-0" />
      <div className="flex w-[18px] justify-center">
        <Icon w={10} h={10}>
          <path d="M7 2h2M4 5h2M7 5h2M1 8h2M4 8h2M7 8h2" stroke="#b5b5b5" strokeWidth="2" />
        </Icon>
      </div>
    </div>
  </main>
);

/* ---------- Project browser ---------- */

// guides: "|" line, "T" branch, "L" last branch, "-" expanded, "+" collapsed
type TreeRow = { guides: string; text: string; icon?: "views" | "legend" | "sheet" };

const tree: TreeRow[] = [
  { guides: "-", text: "Виды (по семействам/типам)", icon: "views" },
  { guides: "|-", text: "Планы этажей" },
  { guides: "||T", text: "Генплан" },
  { guides: "||T", text: "этаж 1" },
  { guides: "||L", text: "этаж 2" },
  { guides: "|-", text: "Планы потолков" },
  { guides: "||L", text: "этаж 1" },
  { guides: "|-", text: "3D виды" },
  { guides: "||L", text: "{3D}" },
  { guides: "|-", text: "Фасады" },
  { guides: "||T", text: "Сзади" },
  { guides: "||T", text: "Слева" },
  { guides: "||T", text: "Спереди" },
  { guides: "||L", text: "Справа" },
  { guides: "|-", text: "Чертежные виды" },
  { guides: "||L", text: "Чертежный вид М" },
  { guides: "|+", text: "Планы зонирования (" },
  { guides: "|+", text: "Планы зонирования (" },
  { guides: "T", text: "Легенды", icon: "legend" },
  { guides: "-", text: "Ведомости/Спецификации", icon: "sheet" },
  { guides: "|T", text: "-Расчет строительного" },
  { guides: "|T", text: "Все виды" },
  { guides: "|T", text: "Все двери" },
  { guides: "|T", text: "Все зоны - группы помещ" },
  { guides: "|T", text: "Все зоны - общая площадь" },
  { guides: "|T", text: "Все зоны - строительные" },
  { guides: "|T", text: "Все листы" },
  { guides: "|T", text: "Все помещения (общая)" },
  { guides: "|T", text: "Все помещения - не разм" },
  { guides: "|T", text: "Все помещения - проверка" },
  { guides: "|T", text: "Все помещения вместимость" },
  { guides: "|T", text: "Все помещения по назнач" },
  { guides: "|T", text: "Все помещения по назнач" },
  { guides: "|T", text: "Все стены" },
];

const Guide = ({ type }: { type: string }) => (
  <Icon w={17} h={15}>
    {type !== "L" && <path d="M8.500 0v15" stroke="#d0d0d0" strokeDasharray="2 1" />}
    {type === "L" && <path d="M8.500 0v7.500" stroke="#d0d0d0" />}
    {type !== "|" && <path d="M8.500 7.500H17" stroke="#d0d0d0" />}
    {(type === "-" || type === "+") && (
      <>
        <rect x="4.500" y="3.500" width="8" height="8" fill="#f4f4f4" stroke="#a5a5a5" />
        <path d="M6 7.500h5" stroke="#667" />
      </>
    )}
    {type === "+" && <path d="M8.500 5v5" stroke="#667" />}
  </Icon>
);

const TreeIcon = ({ type }: { type: TreeRow["icon"] }) => (
  <Icon w={17} h={14}>
    {type === "views" ? (
      <>
        <path d="M5 1.500H2.500v3M12 1.500h2.500v3M5 12.500H2.500v-3M12 12.500h2.500v-3" stroke="#444" />
        <path d="M5.500 5.500l1-1h5v4l-1 1h-5z" />
      </>
    ) : (
      <>
        <path d="M2.500 2.500h12v9h-12zM3 6.500h11M3 8.500h11M6.500 4v7M10.500 4v7" stroke="#999" />
        <path d="M2 3h13" stroke="#555" strokeWidth="2" />
        {type === "legend" && <path d="M4 6h3v2H4zM10 6h3v2h-3z" fill="#666" stroke="none" />}
      </>
    )}
  </Icon>
);

const ProjectBrowser = () => (
  <aside className="flex w-[155px] shrink-0 flex-col bg-white text-[10px]">
    <div className="flex h-[17px] shrink-0 items-center justify-between bg-[#ececec] pl-[2px] pr-px text-[#505050]">
      <h2 className="whitespace-nowrap">Диспетчер проекта - Повто...</h2>
      <button aria-label="Закрыть диспетчер">
        <X size={14} strokeWidth={3} color="#333" />
      </button>
    </div>
    <div className="flex min-h-0 flex-1">
      <ul className="min-w-0 flex-1 overflow-hidden text-[#35455a]">
        {tree.map(({ guides, text, icon }, i) => (
          <li key={i} className="flex items-center overflow-hidden whitespace-nowrap odd:h-[15px] even:h-[14px]">
            {guides.split("").map((type, col) => (
              <Guide key={col} type={type} />
            ))}
            {icon && <TreeIcon type={icon} />}
            <span
              className={clsx(
                icon ? "ml-[2px]" : "ml-[5px]",
                text === "{3D}" && "bg-[#dcdcdc] px-px font-bold text-[#222]"
              )}
            >
              {text}
            </span>
          </li>
        ))}
      </ul>
      <div className="flex w-[13px] flex-col items-center bg-[#efefef] text-[#444]">
        <ChevronUp size={11} strokeWidth={3} className="my-px shrink-0" />
        <div className="h-[35%] w-full bg-[#c9c9c9]" />
        <ChevronDown size={11} strokeWidth={3} className="mt-auto shrink-0" />
      </div>
    </div>
    <div className="flex h-4 shrink-0 items-center bg-[#efefef] pl-[2px] pr-[15px] text-[#444]">
      <ChevronLeft size={11} strokeWidth={3} />
      <div className="ml-[2px] h-3 w-[43px] bg-[#c9c9c9]" />
      <ChevronRight size={11} strokeWidth={3} className="ml-auto" />
    </div>
  </aside>
);

/* ---------- Status bar ---------- */

const pointer = <path d="M8.500 5.500v8l2-2 1.500 3 1-.5-1.500-3h3z" fill="#fff" stroke="#555" />;

const selectionTools = [
  {
    label: "Выбор связей",
    icon: (
      <>
        <path d="M2 5h5M8 5h6" stroke="#d0a63a" strokeWidth="4" />
        <path d="M3 5h4l2 1h4" stroke="#6d5421" strokeWidth="2" />
      </>
    ),
  },
  {
    label: "Выбор подложек",
    icon: (
      <>
        <path d="M1 11l4-7h6l-4 7zM1 13h7" fill="#b7dcef" stroke="#4d7e9c" />
        <path d="M10 2l4 4M14 2l-4 4" stroke="#c32736" strokeWidth="2" />
      </>
    ),
  },
  {
    label: "Выбор закрепленных",
    icon: <path d="M3.500 2.500h5v5h-5zM2 8.500h8M6 9v5M2 2.500h8" fill="#e39a6a" stroke="#c56934" />,
  },
  {
    label: "Выбор по грани",
    icon: <path d="M2.500 3l6-1.500v10l-6 2z" fill="#a6d6f2" stroke="#3c7da3" />,
  },
  {
    label: "Перетаскивание",
    icon: <path d="M5.500 1v9M1 5.500h9M4 2.500l1.500-1.500L7 2.500M2.500 4L1 5.500 2.500 7" stroke="#333" />,
  },
];

const StatusBar = () => (
  <footer className="flex h-[21px] shrink-0 items-center justify-between bg-[#cbcbcb] pl-px pr-[51px] pt-px text-[10px] text-[#333]">
    <p>Щелчок - выбор, TAB - варианты, CTRL - добавление, SHIFT - снятие выбора.</p>
    <div className="flex items-center">
      {selectionTools.map(({ label, icon }) => (
        <Tool key={label} label={label} className="w-5">
          <Icon>
            {icon}
            {pointer}
          </Icon>
        </Tool>
      ))}
      <Tool label="Фоновые процессы" className="w-5">
        <Icon>
          <circle cx="8" cy="8" r="4" stroke="#a5a5a5" strokeWidth="3" strokeDasharray="2 1" />
        </Icon>
      </Tool>
      <button className="flex items-center">
        <Icon>
          <path d="M1.500 2.500h13L10 8v5.500l-3-1.500V8z" fill="#dfe3ea" stroke="#4b5870" />
        </Icon>
        :0
      </button>
    </div>
  </footer>
);

const App = () => (
  <div className="h-screen overflow-hidden bg-black px-[6px] pb-5 pt-[15px] font-[Roboto,sans-serif]">
    <div className="relative flex h-full flex-col">
      <TitleBar />
      <RibbonTabs />
      <Ribbon />
      <div className="h-[23px] shrink-0 border-y border-b-[#c8c8c8] border-t-[#d2d2d2] bg-[#ececec]">
        <div className="ml-[5px] h-full w-[6px] bg-[#e1ecd5]" />
      </div>
      <div className="flex min-h-0 flex-1">
        <PropertiesPanel />
        <div className="w-[2px] bg-[#d4d4d4]" />
        <DrawingArea />
        <ProjectBrowser />
      </div>
      <StatusBar />
      <svg
        width="9"
        height="14"
        viewBox="0 0 9 14"
        aria-hidden="true"
        className="pointer-events-none absolute right-[76px] top-[120px]"
      >
        <path d="M.5.5v11l2.500-2.500 2 4 1.500-.7-2-4H8z" fill="#fff" stroke="#555" />
      </svg>
    </div>
  </div>
);

export default App;
